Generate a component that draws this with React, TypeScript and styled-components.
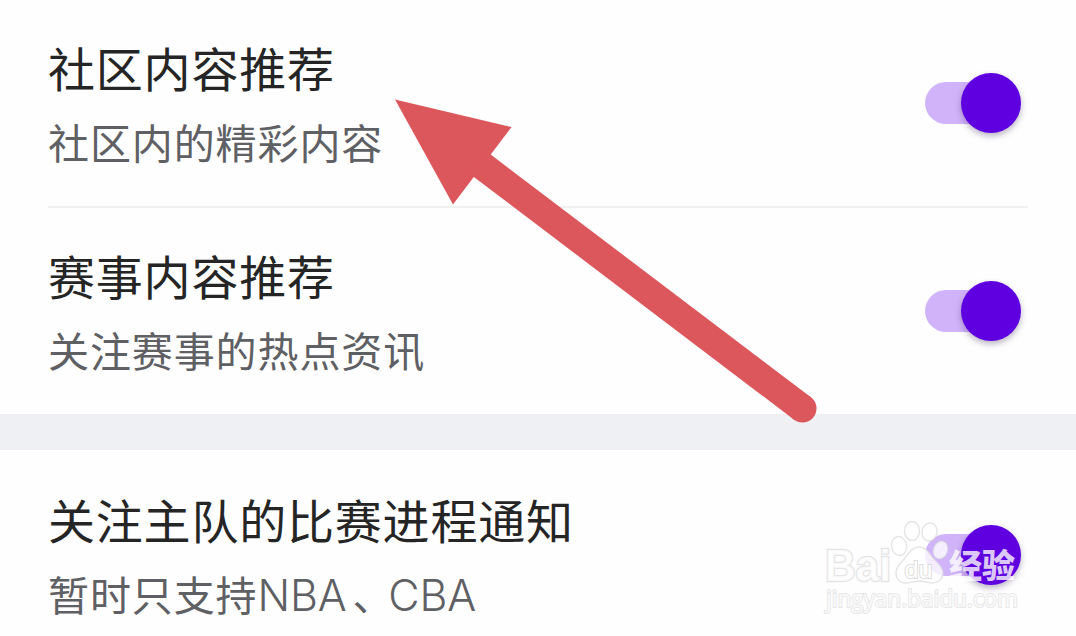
import React from 'react'
import styled, { createGlobalStyle } from 'styled-components'

const GlobalStyle = createGlobalStyle`
  * {
    box-sizing: border-box;
  }

  body {
    margin: 0;
    background: #fefefe;
    font-family: Inter, 'Noto Sans CJK SC', sans-serif;
  }
`

const Page = styled.main`
  position: relative;
  width: 1076px;
  height: 636px;
  overflow: hidden;
`

const Row = styled.section<{ $divider?: boolean }>`
  display: flex;
  justify-content: space-between;
  height: 208px;
  margin: 0 48px;
  border-bottom: ${({ $divider }) => ($divider ? '2px solid #f1f1f2' : 'none')};
`

const Labels = styled.div`
  padding-top: 40px;
  white-space: nowrap;
`

const Title = styled.h2`
  margin: 0;
  color: #252525;
  font-size: 47px;
  font-weight: 400;
  line-height: 60px;
  letter-spacing: 0.8px;
`

const Description = styled.p`
  margin: 18px 0 0;
  color: #5f6064;
  font-size: 41px;
  line-height: 52px;
  letter-spacing: 0.9px;
`

const Latin = styled.span`
  margin-right: 6px;
  font-size: 43px;
  font-weight: 350;
  line-height: 1;
  letter-spacing: -0.2px;

  & + & {
    margin-left: -6px;
  }
`

const Switch = styled.button`
  display: flex;
  align-items: center;
  justify-content: flex-end;
  width: 89px;
  height: 42px;
  margin: 82px 14px 0 0;
  padding: 0;
  border: none;
  border-radius: 21px;
  background: #d0b3f9;
`

const Thumb = styled.span`
  flex: none;
  width: 60px;
  height: 60px;
  margin-right: -7px;
  border-radius: 50%;
  background: #5e00df;
  box-shadow: 0 3px 6px rgba(60, 40, 90, 0.35);
`

const Band = styled.div`
  height: 36px;
  margin: -2px 0 2px;
  background: #eff0f4;
`

const Arrow = styled.svg`
  position: absolute;
  left: 0;
  top: 0;
  pointer-events: none;
`

const Watermark = styled.svg`
  position: absolute;
  left: 816px;
  top: 512px;
  pointer-events: none;

  text {
    paint-order: stroke;
  }
`

interface SettingProps {
  title: string
  divider?: boolean
  children: React.ReactNode
}

const Setting: React.FC<SettingProps> = ({ title, divider, children }) => (
  <Row $divider={divider}>
    <Labels>
      <Title>{title}</Title>
      <Description>{children}</Description>
    </Labels>
    <Switch type="button" role="switch" aria-checked>
      <Thumb />
    </Switch>
  </Row>
)

const App: React.FC = () => (
  <Page>
    <GlobalStyle />
    <Setting title="社区内容推荐" divider>
      社区内的精彩内容
    </Setting>
    <Setting title="赛事内容推荐">关注赛事的热点资讯</Setting>
    <Band />
    <Setting title="关注主队的比赛进程通知">
      暂时只支持<Latin>NBA</Latin>、<Latin>CBA</Latin>
    </Setting>

    <Arrow width="1076" height="636" fill="#dc575c">
      <path d="M395 99.5 511.5 127 453 204.5Z" />
      <path d="M478 162.5 802.5 408.5" stroke="#dc575c" strokeWidth="28" />
      <circle cx="802.5" cy="408.5" r="14" />
    </Arrow>

    <Watermark width="220" height="110" fill="#fff" fillOpacity="0.78" stroke="#dadada" strokeWidth="1.4" strokeOpacity="0.7">
      <text x="9" y="69" fontFamily="Liberation Sans" fontSize="44" fontWeight="700" strokeWidth="2.4" textLength="66" lengthAdjust="spacingAndGlyphs">
        Bai
      </text>
      <ellipse cx="83" cy="34" rx="7.5" ry="9.5" transform="rotate(-12 83 34)" />
      <ellipse cx="96" cy="19" rx="7.5" ry="9.5" />
      <ellipse cx="113.5" cy="20" rx="7.5" ry="9" transform="rotate(12 113.5 20)" />
      <ellipse cx="124.5" cy="38" rx="7" ry="9" transform="rotate(20 124.5 38)" />
      <path d="M103 35c-7 0-10 6-14 11-5 6-9 9-9 15 0 6 4 10 10 10 5 0 9-2 13-2s8 2 13 2c6 0 11-4 11-10s-5-9-10-15c-4-5-7-11-14-11Z" />
      <text x="88.5" y="66" fontFamily="Liberation Sans" fontSize="24" fontWeight="400" fill="#fff" fillOpacity="1" stroke="#cfcfcf" strokeWidth="2" textLength="28" lengthAdjust="spacingAndGlyphs">
        du
      </text>
      <text x="133" y="66" fontFamily="Noto Sans CJK SC" fontSize="33" fontWeight="900" stroke="none" textLength="66">
        经验
      </text>
      <text x="10" y="95" fontFamily="Open Sans" fontSize="23" strokeWidth="2" strokeOpacity="0.6" textLength="192" lengthAdjust="spacingAndGlyphs">
        jingyan.baidu.com
      </text>
    </Watermark>
  </Page>
)

export default App
